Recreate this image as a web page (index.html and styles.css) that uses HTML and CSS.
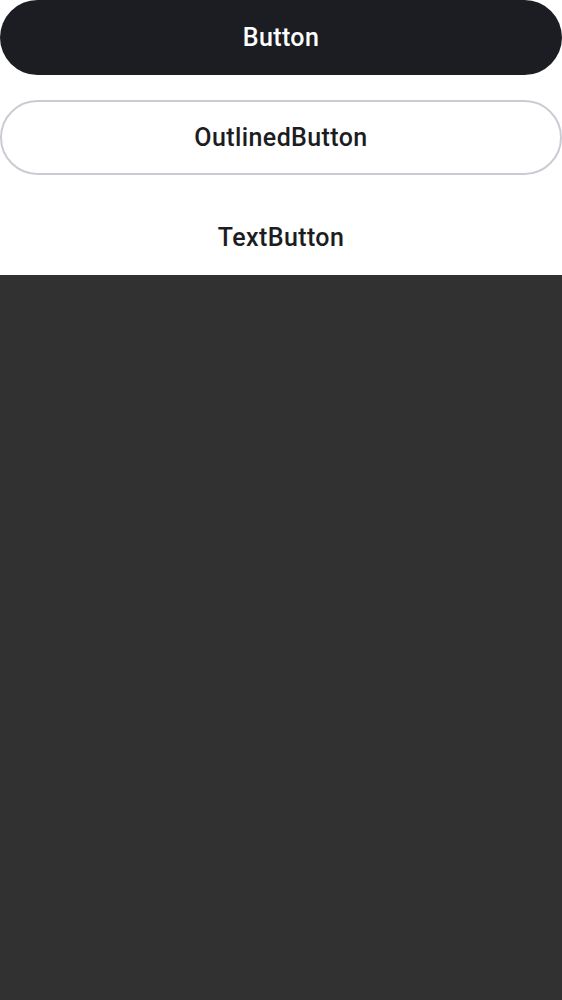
FILE: index.html
```html
<!DOCTYPE html>
<html>
<head>
<meta charset="utf-8">
<link rel="stylesheet" href="styles.css">
</head>
<body>
<div class="panel">
  <button class="btn btn-filled">Button</button>
  <button class="btn btn-outlined">OutlinedButton</button>
  <button class="btn btn-text">TextButton</button>
</div>
</body>
</html>
```
FILE: styles.css
```css
html, body {
  margin: 0;
  padding: 0;
  background: #313131;
  height: 100%;
}
.panel {
  background: #ffffff;
  display: flex;
  flex-direction: column;
  gap: 25px;
}
.btn {
  display: block;
  width: 100%;
  height: 75px;
  border-radius: 37.5px;
  font-family: Roboto, "Liberation Sans", sans-serif;
  font-weight: 500;
  font-size: 25px;
  letter-spacing: 0.4px;
  border: none;
  padding: 0;
  margin: 0;
  cursor: pointer;
  box-sizing: border-box;
}
.btn-filled {
  background: #1c1d22;
  color: #ffffff;
}
.btn-outlined {
  background: #ffffff;
  color: #1c1d22;
  border: 2px solid #c9ccd3;
}
.btn-text {
  background: transparent;
  color: #1c1d22;
}
```
